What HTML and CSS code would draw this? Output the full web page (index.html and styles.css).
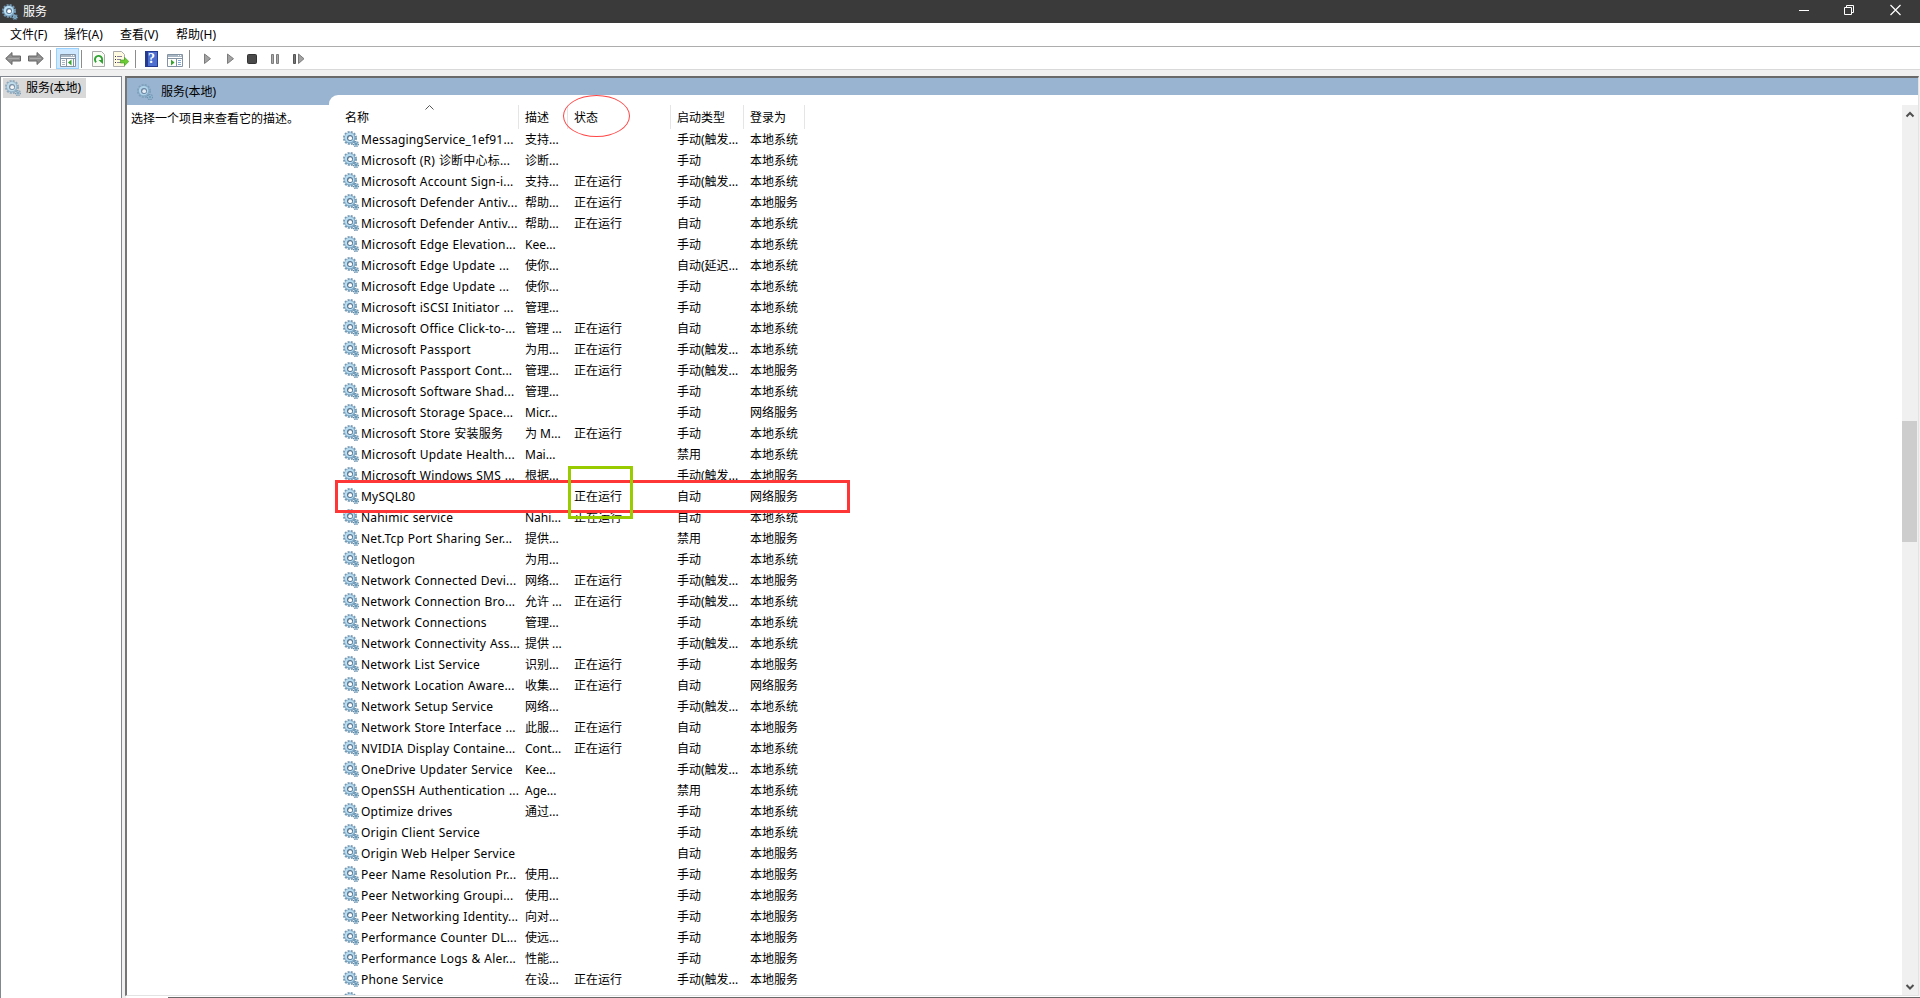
FILE: index.html
```html
<!DOCTYPE html>
<html lang="zh-Hans">
<head>
    <meta charset="UTF-8">
    <title>服务</title>
    <link rel="stylesheet" href="styles.css">
</head>
<body>
    <!-- 齿轮图标 -->
    <svg class="defs" width="0" height="0">
        <symbol id="gear" viewBox="0 0 16 16">
            <circle cx="7" cy="7" r="6" fill="none" stroke="#7599b3" stroke-width="2" stroke-dasharray="2 1.14"/>
            <circle cx="7" cy="7" r="5.5" fill="#7fa9c6"/>
            <circle cx="6.6" cy="6.6" r="4.7" fill="#b9def2"/>
            <circle cx="7" cy="7" r="3" fill="#58748f"/>
            <circle cx="7.2" cy="7.2" r="1.9" fill="#fff"/>
            <circle cx="13" cy="13" r="2.4" fill="none" stroke="#5f86a4" stroke-width="1.4" stroke-dasharray="1.1 .8"/>
            <circle cx="13" cy="13" r="2.1" fill="#8cb6d0"/>
            <circle cx="13" cy="13" r=".8" fill="#4f7490"/>
        </symbol>
    </svg>

    <div class="titlebar">
        <svg class="icon"><use href="#gear"/></svg>
        <span class="title">服务</span>
        <div class="window-buttons">
            <svg width="46" height="23"><path d="M18 10.500h10" stroke="#fff" fill="none"/></svg>
            <svg width="46" height="23"><path d="M17.500 7.500h7v7h-7zM19.500 7.500v-2h7v7h-2" stroke="#fff" fill="none"/></svg>
            <svg width="46" height="23"><path d="M17.500 5l10 10M27.500 5l-10 10" stroke="#fff" stroke-width="1.200" fill="none"/></svg>
        </div>
    </div>

    <div class="menubar">
        <span>文件(F)</span>
        <span>操作(A)</span>
        <span>查看(V)</span>
        <span>帮助(H)</span>
    </div>

    <div class="toolbar">
        <svg class="tool back" width="16" height="16"><path d="M.7 7.500L7 1.500v3.500h8.500v5H7v3.500z" fill="#8f8f8f" stroke="#666"/><path d="M3 7.500h11" stroke="#aaa"/></svg>
        <svg class="tool forward" width="16" height="16"><path d="M15.300 7.500L9 1.500v3.500H.5v5H9v3.500z" fill="#8f8f8f" stroke="#666"/><path d="M2 7.500h11" stroke="#aaa"/></svg>
        <i class="sep"></i>
        <span class="tool active">
            <svg width="16" height="13"><path d="M.5.5h15v12H.5z" fill="#fff" stroke="#8493a3"/><path d="M1 1h14v2H1z" fill="#a9b7c5"/><path d="M11 1.500h1M13 1.500h1" stroke="#fff"/><path d="M1 4.500h14M6.500 5v7M13.500 5v7" stroke="#8493a3"/><path d="M2 6.500h3M2 8.500h3M2 10.500h3" stroke="#a9b7c5"/><path d="M11.500 5.500v6L8 8.500z" fill="#35a52c"/></svg>
        </span>
        <i class="sep"></i>
        <svg class="tool refresh" width="13" height="16"><path d="M.5.5h9l3 3v12H.5z" fill="#fbfbf6" stroke="#aaa"/><path d="M4.200 11.200a3.600 3.600 0 1 1 5-.3" fill="none" stroke="#2fa332" stroke-width="1.900"/><path d="M6.500 9h4.500v4z" fill="#2fa332"/></svg>
        <svg class="tool export" width="16" height="16"><path d="M.5.5h8l3 3v12H.5z" fill="#fffbe0" stroke="#aaa"/><path d="M2 5.500h1M2 8.500h1M2 11.500h1" stroke="#333"/><path d="M4 5.500h5M4 8.500h4M4 11.500h5" stroke="#8a80a0"/><path d="M7.500 9h4V6.200l4.300 4.300-4.300 4.200V12h-4z" fill="#6ccc33" stroke="#429d23" stroke-width=".6"/></svg>
        <i class="sep"></i>
        <span class="tool help">?</span>
        <svg class="tool console" width="16" height="13"><path d="M.5.5h15v12H.5z" fill="#fff" stroke="#8493a3"/><path d="M1 1h14v2H1z" fill="#a9b7c5"/><path d="M11 1.500h1M13 1.500h1" stroke="#fff"/><path d="M1 4.500h14M9.500 5v7" stroke="#8493a3"/><path d="M11 6.500h3M11 8.500h3M11 10.500h3" stroke="#7da6d3"/><path d="M4 5.500v6L7.500 8.500z" fill="#35a52c"/></svg>
        <i class="sep"></i>
        <svg class="tool play" width="8" height="12"><path d="M.5 1v9.500L6.500 5.700z" fill="#a3a3a3" stroke="#7c7c7c"/></svg>
        <svg class="tool play2" width="8" height="12"><path d="M.5 1v9.500L6.500 5.700z" fill="#a3a3a3" stroke="#7c7c7c"/></svg>
        <svg class="tool stop" width="10" height="10"><rect x=".5" y=".5" width="9" height="9" rx="1" fill="#4a4a4a" stroke="#333"/></svg>
        <svg class="tool pause" width="8" height="10"><path d="M.5.5h2v9h-2zM5.500.5h2v9h-2z" fill="#aaa" stroke="#7c7c7c"/></svg>
        <svg class="tool step" width="12" height="12"><path d="M.5 1.500h2v9h-2z" fill="#777" stroke="#555"/><path d="M5.500 1v9.500l5.500-4.800z" fill="#a3a3a3" stroke="#7c7c7c"/></svg>
    </div>

    <div class="workspace">
        <div class="tree">
            <div class="tree-item">
                <svg class="icon faded"><use href="#gear"/></svg>
                <span>服务(本地)</span>
            </div>
        </div>

        <div class="content">
            <div class="band">
                <svg class="icon faded"><use href="#gear"/></svg>
                <span>服务(本地)</span>
            </div>
            <div class="description">选择一个项目来查看它的描述。</div>
            <div class="results">
                <div class="list">
                    <div class="row head">
                        <span>名称<svg class="sort" width="9" height="5"><path d="M.5 4.500l4-4 4 4" fill="none" stroke="#555"/></svg></span>
                        <span>描述</span>
                        <span>状态</span>
                        <span>启动类型</span>
                        <span>登录为</span>
                    </div>
                    <div id="rows"></div>
                </div>
                <div class="scrollbar">
                    <svg class="arrow" width="16" height="18"><path d="M4.500 11.500l3.500-3.500 3.500 3.500" fill="none" stroke="#505050" stroke-width="2"/></svg>
                    <div class="thumb"></div>
                    <svg class="arrow down" width="16" height="18"><path d="M4.500 8l3.500 3.500 3.500-3.500" fill="none" stroke="#505050" stroke-width="2"/></svg>
                </div>
            </div>
        </div>
    </div>
    <div class="bottom-edge"></div>

    <!-- 标注 -->
    <div class="mark mark-status"></div>
    <div class="mark mark-row"></div>
    <div class="mark mark-running"></div>

    <script>
        // 名称 | 描述 | 是否运行 | 启动类型 | 登录为
        const services = `
MessagingService_1ef91...|支持...||手动(触发...|本地系统
Microsoft (R) 诊断中心标...|诊断...||手动|本地系统
Microsoft Account Sign-i...|支持...|1|手动(触发...|本地系统
Microsoft Defender Antiv...|帮助...|1|手动|本地服务
Microsoft Defender Antiv...|帮助...|1|自动|本地系统
Microsoft Edge Elevation...|Kee...||手动|本地系统
Microsoft Edge Update ...|使你...||自动(延迟...|本地系统
Microsoft Edge Update ...|使你...||手动|本地系统
Microsoft iSCSI Initiator ...|管理...||手动|本地系统
Microsoft Office Click-to-...|管理 ...|1|自动|本地系统
Microsoft Passport|为用...|1|手动(触发...|本地系统
Microsoft Passport Cont...|管理...|1|手动(触发...|本地服务
Microsoft Software Shad...|管理...||手动|本地系统
Microsoft Storage Space...|Micr...||手动|网络服务
Microsoft Store 安装服务|为 M...|1|手动|本地系统
Microsoft Update Health...|Mai...||禁用|本地系统
Microsoft Windows SMS ...|根据...||手动(触发...|本地服务
MySQL80||1|自动|网络服务
Nahimic service|Nahi...|1|自动|本地系统
Net.Tcp Port Sharing Ser...|提供...||禁用|本地服务
Netlogon|为用...||手动|本地系统
Network Connected Devi...|网络...|1|手动(触发...|本地服务
Network Connection Bro...|允许 ...|1|手动(触发...|本地系统
Network Connections|管理...||手动|本地系统
Network Connectivity Ass...|提供 ...||手动(触发...|本地系统
Network List Service|识别...|1|手动|本地服务
Network Location Aware...|收集...|1|自动|网络服务
Network Setup Service|网络...||手动(触发...|本地系统
Network Store Interface ...|此服...|1|自动|本地服务
NVIDIA Display Containe...|Cont...|1|自动|本地系统
OneDrive Updater Service|Kee...||手动(触发...|本地系统
OpenSSH Authentication ...|Age...||禁用|本地系统
Optimize drives|通过...||手动|本地系统
Origin Client Service|||手动|本地系统
Origin Web Helper Service|||自动|本地服务
Peer Name Resolution Pr...|使用...||手动|本地服务
Peer Networking Groupi...|使用...||手动|本地服务
Peer Networking Identity...|向对...||手动|本地服务
Performance Counter DL...|使远...||手动|本地服务
Performance Logs & Aler...|性能...||手动|本地服务
Phone Service|在设...|1|手动(触发...|本地服务
||||`.trim().split('\n');

        document.getElementById('rows').innerHTML = services.map(line => {
            const [name, desc, running, type, logon] = line.replace('&', '&amp;').split('|');
            return `
                <div class="row">
                    <span class="name"><svg class="icon"><use href="#gear"/></svg>${name}</span>
                    <span>${desc}</span>
                    <span>${running ? '正在运行' : ''}</span>
                    <span>${type}</span>
                    <span>${logon}</span>
                </div>`;
        }).join('');
    </script>
</body>
</html>
```
FILE: styles.css
```css
* {
    box-sizing: border-box;
}

body {
    margin: 0;
    height: 998px;
    display: flex;
    flex-direction: column;
    overflow: hidden;
    position: relative;
    background: #f0f0f0;
    color: #000;
    font: 12px/20px "Noto Sans", "Noto Sans CJK SC", sans-serif;
    white-space: nowrap;
}

svg {
    display: block;
    flex: none;
}

.defs {
    position: absolute;
}

.icon {
    width: 16px;
    height: 16px;
}

.faded {
    opacity: .75;
}

/* 标题栏 */
.titlebar {
    display: flex;
    align-items: center;
    flex: none;
    height: 23px;
    padding-left: 2px;
    background: #3a3a3a;
    color: #fff;
}

.title {
    margin-left: 5px;
}

.window-buttons {
    display: flex;
    margin-left: auto;
    padding-right: 1px;
}

/* 菜单栏 */
.menubar {
    display: flex;
    flex: none;
    height: 24px;
    padding: 2px 0 0 10px;
    background: #fff;
    border-bottom: 1px solid #adadad;
}

    .menubar span {
        width: 56px;
    }

        .menubar span:first-child {
            width: 54px;
        }

/* 工具栏 */
.toolbar {
    display: flex;
    align-items: center;
    flex: none;
    height: 23px;
    padding: 1px 0 0 5px;
    background: #fff;
    border-bottom: 1px solid #d9d9d9;
}

.sep {
    width: 1px;
    height: 18px;
    background: #8c8c8c;
}

.back, .forward { margin-top: 1px; }
.forward { margin-left: 7px; margin-right: 6px; }

.active {
    display: flex;
    align-items: flex-end;
    justify-content: center;
    width: 23px;
    height: 21px;
    margin: 0 2px 0 5px;
    padding-bottom: 1px;
    background: #cde8ff;
    border: 1px solid #99d1ff;
}

.refresh { margin-left: 10px; }
.export { margin: 0 6px 0 8px; }

.help {
    width: 13px;
    height: 16px;
    margin-left: 9px;
    background: linear-gradient(90deg, #24398f 0 2px, #4c6fd0 2px);
    border: 1px solid #24398f;
    color: #fff;
    font: bold 14px/14px "Liberation Serif", serif;
    text-align: center;
}

.console { margin: 3px 6px 0 9px; }
.play { margin-left: 14px; }
.play2 { margin-left: 15px; }
.stop { margin-left: 12px; }
.pause { margin-left: 14px; }
.step { margin-left: 14px; }

/* 主区域 */
.workspace {
    display: flex;
    flex: 1;
    min-height: 0;
    padding-top: 6px;
}

.tree {
    width: 122px;
    margin-bottom: -2px;
    padding: 1px 2px;
    background: #fff;
    border: 1px solid #828790;
    border-bottom: 0;
}

.tree-item {
    display: flex;
    align-items: center;
    width: 83px;
    height: 20px;
    padding-left: 2px;
    background: #d9d9d9;
}

    .tree-item span {
        margin-left: 5px;
    }

.content {
    flex: 1;
    display: grid;
    grid-template-columns: 202px 1fr;
    grid-template-rows: 17px 10px 1fr;
    margin: 0 1px 0 3px;
    background: #fff;
    border: 2px solid #696969;
    border-right: 1px solid #e3e3e3;
    border-bottom: 1px solid #e3e3e3;
    border-left-color: #757575;
    min-height: 0;
}

.band {
    grid-area: 1 / 1 / 3 / 3;
    display: flex;
    align-items: center;
    padding-left: 10px;
    background: #99b4d1;
}

    .band span {
        margin-left: 8px;
    }

.description {
    grid-area: 3 / 1;
    padding: 4px 0 0 4px;
}

.results {
    grid-area: 2 / 2 / 4 / 3;
    display: flex;
    min-height: 0;
    padding-top: 10px;
    background: #fff;
    border-top-left-radius: 9px;
}

.list {
    flex: 1;
    overflow: hidden;
}

.row {
    display: grid;
    grid-template-columns: 190px 49px 103px 73px 61px;
    height: 21px;
}

    .row > span {
        padding: 1px 0 0 6px;
    }

    .row .name {
        display: flex;
        padding: 2px 0 0 14px;
        line-height: 18px;
        gap: 2px;
        letter-spacing: .2px;
        word-spacing: .5px;
    }

.head {
    height: 24px;
}

    .head > span {
        position: relative;
        padding-top: 3px;
        border-right: 1px solid #e5e5e5;
    }

        .head > span:first-child {
            padding-left: 16px;
        }

.sort {
    position: absolute;
    left: 96px;
    top: 0;
}

.scrollbar {
    display: flex;
    flex-direction: column;
    width: 16px;
    background: #f0f0f0;
}

.thumb {
    width: 15px;
    height: 121px;
    margin-top: 298px;
    background: #cdcdcd;
}

.down {
    margin-top: auto;
}

.bottom-edge {
    flex: none;
    height: 2px;
    margin-left: 126px;
    background: linear-gradient(90deg, #fff 42px, transparent 42px), linear-gradient(#fff 1px, #696969 1px);
}

/* 标注框 */
.mark {
    position: absolute;
}

.mark-status {
    left: 563px;
    top: 95px;
    width: 67px;
    height: 42px;
    border: 1px solid #ff4545;
    border-radius: 50%;
}

.mark-row {
    left: 335px;
    top: 480px;
    width: 515px;
    height: 33px;
    border: 3px solid #ff3636;
}

.mark-running {
    left: 568px;
    top: 466px;
    width: 65px;
    height: 53px;
    border: 3px solid #99cc00;
}
```
